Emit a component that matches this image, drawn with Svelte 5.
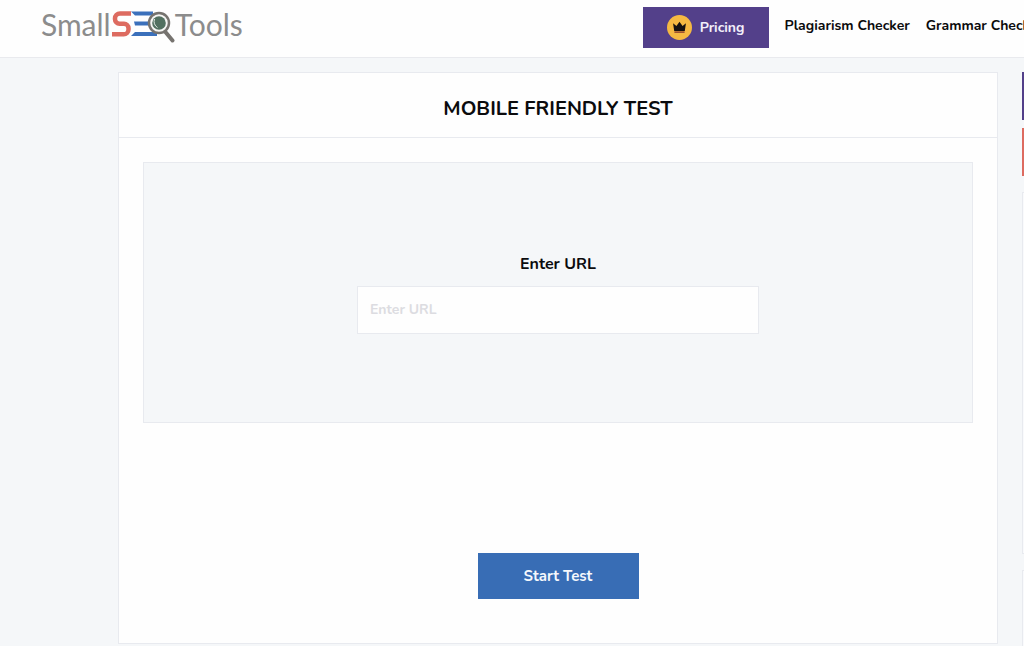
<script lang="ts">
	let url = $state('');

	const links = [
		{ label: 'Plagiarism Checker', href: '#plagiarism' },
		{ label: 'Grammar Checker', href: '#grammar' }
	];
</script>

<header class="header">
	<a class="logo" href="#home" aria-label="SmallSEOTools">
		<span>Small</span>
		<svg class="logo-mark" viewBox="0 0 64 36" width="64" height="36" aria-hidden="true">
			<path d="M20 5.500H9a5 5 0 0 0-5 5v.7a4.500 4.500 0 0 0 4.500 4.500H13a4.500 4.500 0 0 1 4.500 4.500v1.300a4.800 4.800 0 0 1-4.800 4.800H1" fill="none" stroke="#dd6b60" stroke-width="4.500" />
			<path d="M20 3.500h22v4H24zM23 13.500h19v4H24zM24 24h22v4H20z" fill="#3b70bb" />
			<path d="M54 23.500l7.500 9" stroke="#76736f" stroke-width="4" stroke-linecap="round" />
			<circle cx="48" cy="15" r="10" fill="#f6f6f4" stroke="#76736f" stroke-width="2.500" />
			<circle cx="48" cy="15" r="6.800" fill="#527060" />
			<path d="M43.500 11a7 7 0 0 0 3 8.500" fill="none" stroke="#e0e7e2" stroke-width="1" />
		</svg>
		<span>Tools</span>
	</a>
	<nav class="nav">
		<a class="pricing" href="#pricing">
			<svg viewBox="0 0 26 26" width="25" height="25" aria-hidden="true">
				<circle cx="13" cy="13" r="13" fill="#f5b942" />
				<path d="M6.300 8.500l3.500 3L13 7l3.200 4.500 3.500-3-1.200 8.200H7.500z" fill="#151210" />
				<path d="M7.700 17.800h10.600" stroke="#8b3f2e" stroke-width="1.500" />
			</svg>
			Pricing
		</a>
		{#each links as link}
			<a class="nav-link" href={link.href}>{link.label}</a>
		{/each}
	</nav>
</header>

<div class="layout">
	<main class="card">
		<h1>Mobile Friendly Test</h1>
		<form onsubmit={(e) => e.preventDefault()}>
			<div class="panel">
				<label for="url">Enter URL</label>
				<input id="url" type="text" placeholder="Enter URL" bind:value={url} />
			</div>
			<button type="submit">Start Test</button>
		</form>
	</main>
	<aside class="sidebar">
		<div class="promo purple"></div>
		<div class="promo red"></div>
		<div class="box tall"></div>
		<div class="box"></div>
	</aside>
</div>

<style>
	:global(body) {
		background: #f5f7f9;
		color: #0b0b0d;
		font-family: Nunito, Lato, sans-serif;
		overflow: hidden;
	}

	.header {
		display: flex;
		align-items: flex-start;
		justify-content: space-between;
		box-sizing: border-box;
		height: 58px;
		padding-left: 41px;
		background: #fefefe;
		border-bottom: 1px solid #e9eaee;
		overflow: hidden;
	}

	.logo {
		display: flex;
		align-items: center;
		flex-shrink: 0;
		height: 48px;
		color: #8c8c8c;
		font-family: Lato, sans-serif;
		font-size: 30px;
		font-weight: 400;
		text-decoration: none;
	}

	.logo-mark {
		margin-top: 4px;
	}

	.nav {
		display: flex;
		align-items: flex-start;
		gap: 16px;
		margin: 7px -19px 0 0;
		font-size: 14px;
		font-weight: 700;
		white-space: nowrap;
	}

	.nav a {
		text-decoration: none;
	}

	.pricing {
		display: flex;
		align-items: center;
		gap: 8px;
		height: 41px;
		padding: 0 24px;
		background: #53408a;
		color: #f3f0fa;
	}

	.nav-link {
		color: #0b0b0d;
		line-height: 38px;
	}

	.layout {
		display: flex;
		align-items: flex-start;
		gap: 24px;
		margin: 14px -298px 0 118px;
	}

	.card {
		flex: 1;
		background: #fefefe;
		border: 1px solid #e8eaef;
	}

	h1 {
		margin: 0;
		padding: 24px 0 16px;
		border-bottom: 1px solid #e8eaef;
		font-size: 20px;
		line-height: 24px;
		text-align: center;
		text-transform: uppercase;
	}

	form {
		display: flex;
		flex-direction: column;
		align-items: center;
		padding: 24px 24px 44px;
	}

	.panel {
		display: flex;
		flex-direction: column;
		align-items: center;
		align-self: stretch;
		gap: 12px;
		padding: 91px 24px 88px;
		background: #f5f7f9;
		border: 1px solid #e8eaef;
	}

	label {
		font-size: 16px;
		font-weight: 700;
		line-height: 20px;
	}

	input {
		box-sizing: border-box;
		width: 100%;
		max-width: 402px;
		height: 48px;
		padding: 0 12px 2px;
		border: 1px solid #e8eaef;
		background: #fefefe;
		color: #0b0b0d;
		font: inherit;
		font-size: 14px;
		font-weight: 700;
	}

	input::placeholder {
		color: #dcdce1;
		opacity: 1;
	}

	button {
		width: 161px;
		height: 46px;
		margin-top: 130px;
		border: 0;
		background: #386db5;
		color: #f5f8fc;
		font: inherit;
		font-size: 15px;
		font-weight: 700;
	}

	.sidebar {
		flex: 0 0 300px;
	}

	.promo {
		height: 48px;
		margin-bottom: 8px;
	}

	.purple {
		background: #53408a;
	}

	.red {
		margin-bottom: 16px;
		background: #dd6b60;
	}

	.box {
		height: 160px;
		border: 1px solid #e8eaef;
		background: #f9fafc;
	}

	.tall {
		height: 360px;
		margin-bottom: 16px;
	}
</style>
